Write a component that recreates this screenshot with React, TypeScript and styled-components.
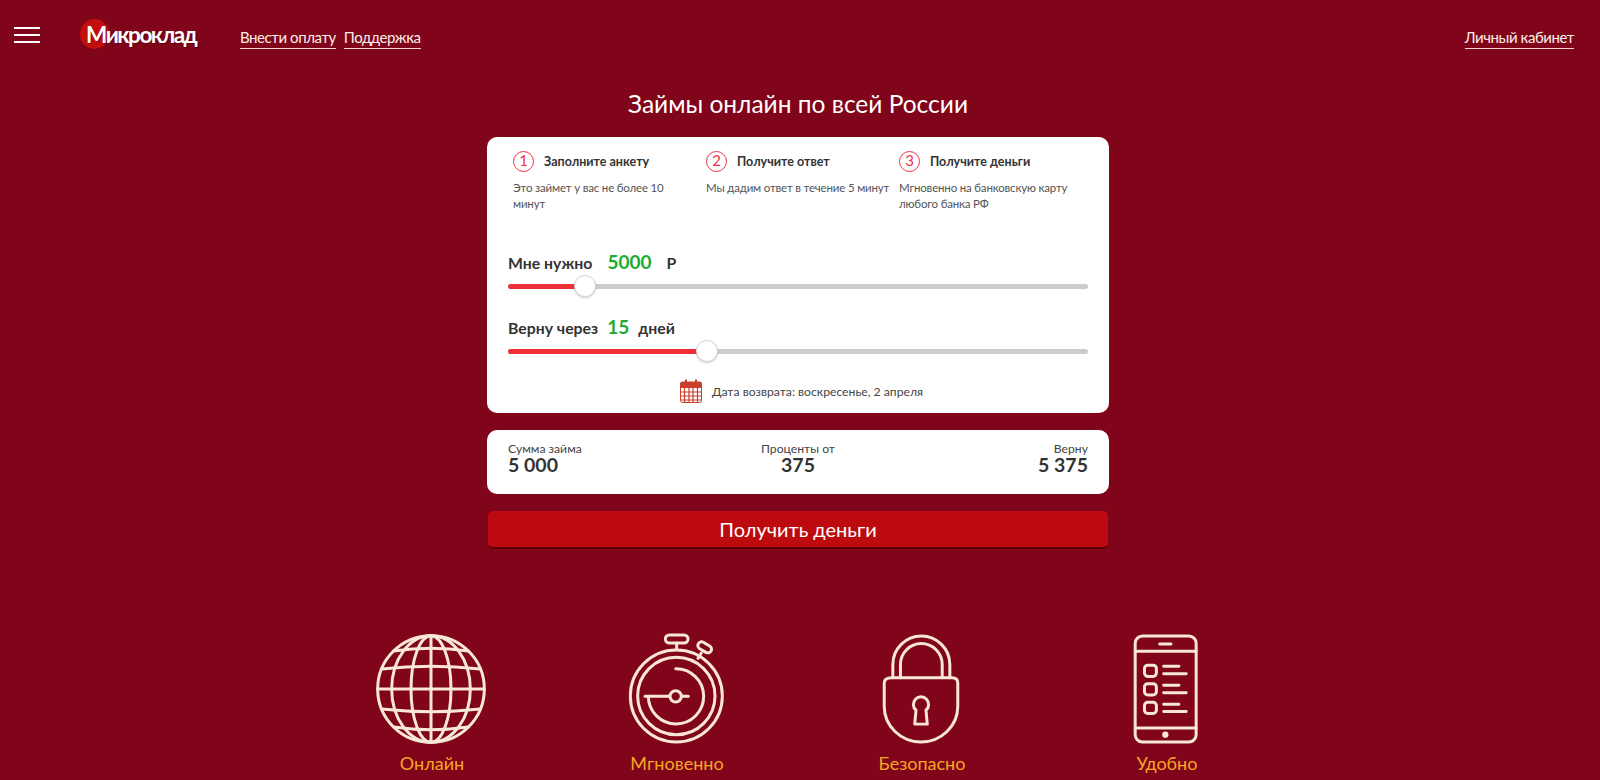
import React from "react";
import styled, { createGlobalStyle } from "styled-components";

const FONT = `Lato, "Noto Sans", Roboto, sans-serif`;
const CREAM = "#f9e7d6";

const Global = createGlobalStyle`
  html, body { margin: 0; padding: 0; height: 100%; overflow: hidden; background: #80051a; }
  body { font-family: ${FONT}; color: #333; }
  #root { height: 100%; }
  * { box-sizing: border-box; }
`;

const Page = styled.div`
  min-height: 100%;
  background: #80051a;
`;

const Main = styled.main`
  display: flex;
  flex-direction: column;
  align-items: center;
  padding-right: 4px;
`;

const Header = styled.header`
  width: 100%;
  height: 74px;
  display: flex;
  align-items: flex-start;
  padding: 27px 26px 0 14px;
`;

const Burger = styled.div`
  width: 26px;
  height: 16px;
  display: flex;
  flex-direction: column;
  justify-content: space-between;
  span { display: block; height: 2px; background: #fff; }
`;

const Logo = styled.div`
  position: relative;
  margin: -8px 0 0 40px;
  width: 120px;
  height: 30px;
  display: flex;
  align-items: center;
  &::before {
    content: "";
    position: absolute;
    left: 0;
    top: 0;
    width: 29px;
    height: 30px;
    border-radius: 50%;
    background: #c40d0d;
  }
`;

const LogoText = styled.span`
  position: relative;
  margin-left: 6px;
  font-size: 22.5px;
  font-weight: 700;
  letter-spacing: -1.45px;
  color: #fff;
  text-shadow: 1px 1px 1px rgba(60, 0, 0, 0.5);
`;

const Nav = styled.nav`
  display: flex;
  gap: 8px;
  margin-left: 40px;
`;

const NavLink = styled.a`
  display: block;
  margin-top: -27px;
  padding: 27px 0 1px;
  height: 49px;
  font-size: 15px;
  letter-spacing: -0.43px;
  line-height: 20px;
  color: #fbeee8;
  border-bottom: 1px solid #f1d6d6;
  white-space: nowrap;
`;

const Spacer = styled.div`
  flex: 1;
`;

const Title = styled.h1`
  margin: 0;
  height: 63px;
  font-size: 24.5px;
  line-height: 60px;
  font-weight: 400;
  color: #fff;
  text-align: center;
`;

const Card = styled.section`
  width: 622px;
  background: #fff;
  border-radius: 10px;
`;

const MainCard = styled(Card)`
  height: 276px;
  padding: 14px 21px 0;
`;

const Steps = styled.div`
  display: grid;
  grid-template-columns: repeat(3, 193px);
  padding-left: 5px;
  height: 95px;
`;

const Step = styled.div`
  display: flex;
  flex-direction: column;
`;

const StepHead = styled.div`
  display: flex;
  align-items: center;
  gap: 10px;
  height: 21px;
  font-size: 12.5px;
  font-weight: 700;
  color: #333;
`;

const StepNum = styled.span`
  flex: none;
  width: 21px;
  height: 21px;
  border: 1.7px solid #ef3340;
  border-radius: 50%;
  color: #ef3340;
  font-size: 15px;
  font-weight: 400;
  line-height: 17px;
  text-align: center;
`;

const StepText = styled.p`
  margin: 8px 0 0;
  font-size: 11.5px;
  letter-spacing: -0.18px;
  line-height: 16px;
  color: #555;
  white-space: pre-line;
`;

const SliderBlock = styled.div`
  height: 65px;
`;

const SliderLabel = styled.div`
  display: flex;
  align-items: baseline;
  height: 32px;
  margin-bottom: 6px;
  line-height: 32px;
  font-size: 15.8px;
  font-weight: 700;
  color: #333;
`;

const Value = styled.span<{ $ml: number; $mr: number }>`
  margin: 0 ${(p) => p.$mr}px 0 ${(p) => p.$ml}px;
  font-size: 19px;
  font-weight: 700;
  color: #1cab2e;
`;

const Track = styled.div`
  position: relative;
  height: 5px;
  border-radius: 3px;
  background: #cccccc;
`;

const Fill = styled.div`
  height: 100%;
  border-radius: 3px;
  background: #ef3038;
`;

const Thumb = styled.div`
  position: absolute;
  top: -9px;
  width: 22px;
  height: 22px;
  margin-left: -11px;
  border-radius: 50%;
  background: #fff;
  border: 1px solid #d8d8d8;
  box-shadow: 0 1px 2px rgba(0, 0, 0, 0.2);
`;

const DateRow = styled.div`
  display: flex;
  justify-content: center;
  align-items: center;
  gap: 10px;
  margin-top: 3px;
  padding-left: 7px;
  font-size: 12.2px;
  color: #444;
`;

const DateText = styled.span`
  margin-top: 1px;
`;

const SumCard = styled(Card)`
  margin-top: 17px;
  height: 64px;
  padding: 12px 21px 0;
  display: grid;
  grid-template-columns: 1fr 1fr 1fr;
`;

const SumCol = styled.div<{ $align: string }>`
  text-align: ${(p) => p.$align};
`;

const SumLabel = styled.div`
  font-size: 12.2px;
  line-height: 13px;
  color: #444;
`;

const SumValue = styled.div`
  font-size: 19.5px;
  line-height: 20px;
  font-weight: 700;
  color: #333;
`;

const GetButton = styled.button`
  display: block;
  margin-top: 17px;
  width: 620px;
  height: 38px;
  padding: 0;
  border: 0;
  border-bottom: 2px solid #5e0008;
  border-radius: 5px;
  background: #bd0a0e;
  color: #fff;
  font-family: ${FONT};
  font-size: 20px;
  line-height: 34px;
`;

const Features = styled.div`
  margin-top: 85px;
  display: grid;
  grid-template-columns: repeat(4, 245px);
`;

const Feature = styled.div`
  display: flex;
  flex-direction: column;
  align-items: center;
`;

const IconBox = styled.div`
  height: 110px;
  display: flex;
  align-items: flex-end;
  svg { display: block; fill: none; stroke: ${CREAM}; stroke-width: 9; stroke-linecap: round; stroke-linejoin: round; }
`;

const FeatureLabel = styled.div`
  margin-top: 7px;
  padding-left: 3px;
  font-size: 18px;
  line-height: 24px;
  color: #f5a623;
`;

const Globe = () => (
  <svg width="110" height="110" viewBox="49 41 330 330">
    <circle cx="214" cy="206" r="160" />
    <ellipse cx="214" cy="206" rx="60" ry="160" />
    <ellipse cx="214" cy="206" rx="118" ry="160" />
    <path d="M214 46V366M54 206H374" />
    <path d="M102 92Q214 76 326 92M66 146Q214 130 362 146M66 266Q214 282 362 266M102 320Q214 336 326 320" />
  </svg>
);

const Watch = () => (
  <svg width="96" height="111" viewBox="804 40 288 333">
    <circle cx="949" cy="229" r="138" />
    <circle cx="949" cy="229" r="116" />
    <path d="M947 147A83 83 0 1 1 865 230" />
    <path d="M855 230H928M968 230H985" />
    <circle cx="947" cy="230" r="17" />
    <rect x="916" y="46" width="68" height="24" rx="12" />
    <path d="M950 70V90" />
    <rect x="1012" y="72" width="44" height="22" rx="11" transform="rotate(30 1034 83)" />
    <path d="M1024 100L1014 116" />
  </svg>
);

const Lock = () => (
  <svg width="78" height="110" viewBox="124 40 234 332">
    <path d="M152 172H335Q352 172 352 188V258A111 108 0 0 1 130 258V188Q130 172 152 172Z" />
    <path d="M156 172V132A86 86 0 0 1 328 132V172" />
    <path d="M179 172V132A63 63 0 0 1 305 132V172" />
    <path d="M226 270A23 23 0 1 1 256 270L260 312H222Z" />
  </svg>
);

const Phone = () => (
  <svg width="66" height="110" viewBox="878 40 198 332">
    <rect x="884" y="46" width="184" height="320" rx="22" />
    <path d="M884 92H1068M884 324H1068M958 70H992" />
    <circle cx="975" cy="344" r="5" />
    <rect x="912" y="134" width="36" height="34" rx="10" />
    <rect x="912" y="190" width="36" height="34" rx="10" />
    <rect x="912" y="246" width="36" height="34" rx="10" />
    <path d="M970 137H1016M970 160H1038M970 195H1016M970 217H1038M970 252H1016M970 274H1038" />
  </svg>
);

const Calendar = () => (
  <svg width="22" height="24" viewBox="0 0 22 24" fill="none">
    <rect x="0.5" y="3" width="21" height="20.5" rx="2" fill="#fff" stroke="#c8402c" />
    <rect x="0" y="3" width="22" height="6" rx="2" fill="#c8402c" />
    <path d="M6 0.5V5M16 0.5V5" stroke="#c8402c" strokeWidth="2" />
    <path d="M1 13H21M1 17H21M1 21H21M4.5 9V23M9 9V23M13 9V23M17.5 9V23" stroke="#c8402c" strokeWidth="1.2" />
  </svg>
);

const steps = [
  { n: 1, t: "Заполните анкету", d: "Это займет у вас не более 10\nминут" },
  { n: 2, t: "Получите ответ", d: "Мы дадим ответ в течение 5 минут" },
  { n: 3, t: "Получите деньги", d: "Мгновенно на банковскую карту\nлюбого банка РФ" },
];

const App: React.FC = () => (
  <Page>
    <Global />
    <Header>
      <Burger><span /><span /><span /></Burger>
      <Logo><LogoText>Микроклад</LogoText></Logo>
      <Nav>
        <NavLink>Внести оплату</NavLink>
        <NavLink>Поддержка</NavLink>
      </Nav>
      <Spacer />
      <NavLink>Личный кабинет</NavLink>
    </Header>
    <Main>
      <Title>Займы онлайн по всей России</Title>
      <MainCard>
        <Steps>
          {steps.map((s) => (
            <Step key={s.n}>
              <StepHead><StepNum>{s.n}</StepNum>{s.t}</StepHead>
              <StepText>{s.d}</StepText>
            </Step>
          ))}
        </Steps>
        <SliderBlock>
          <SliderLabel>Мне нужно<Value $ml={15} $mr={15}>5000</Value>Р</SliderLabel>
          <Track>
            <Fill style={{ width: "13.2%" }} />
            <Thumb style={{ left: "13.2%" }} />
          </Track>
        </SliderBlock>
        <SliderBlock>
          <SliderLabel>Верну через<Value $ml={9} $mr={9}>15</Value>дней</SliderLabel>
          <Track>
            <Fill style={{ width: "34.3%" }} />
            <Thumb style={{ left: "34.3%" }} />
          </Track>
        </SliderBlock>
        <DateRow><Calendar /><DateText>Дата возврата: воскресенье, 2 апреля</DateText></DateRow>
      </MainCard>
      <SumCard>
        <SumCol $align="left"><SumLabel>Сумма займа</SumLabel><SumValue>5 000</SumValue></SumCol>
        <SumCol $align="center"><SumLabel>Проценты от</SumLabel><SumValue>375</SumValue></SumCol>
        <SumCol $align="right"><SumLabel>Верну</SumLabel><SumValue>5 375</SumValue></SumCol>
      </SumCard>
      <GetButton>Получить деньги</GetButton>
      <Features>
        <Feature><IconBox><Globe /></IconBox><FeatureLabel>Онлайн</FeatureLabel></Feature>
        <Feature><IconBox><Watch /></IconBox><FeatureLabel>Мгновенно</FeatureLabel></Feature>
        <Feature><IconBox><Lock /></IconBox><FeatureLabel>Безопасно</FeatureLabel></Feature>
        <Feature><IconBox><Phone /></IconBox><FeatureLabel>Удобно</FeatureLabel></Feature>
      </Features>
    </Main>
  </Page>
);

export default App;
